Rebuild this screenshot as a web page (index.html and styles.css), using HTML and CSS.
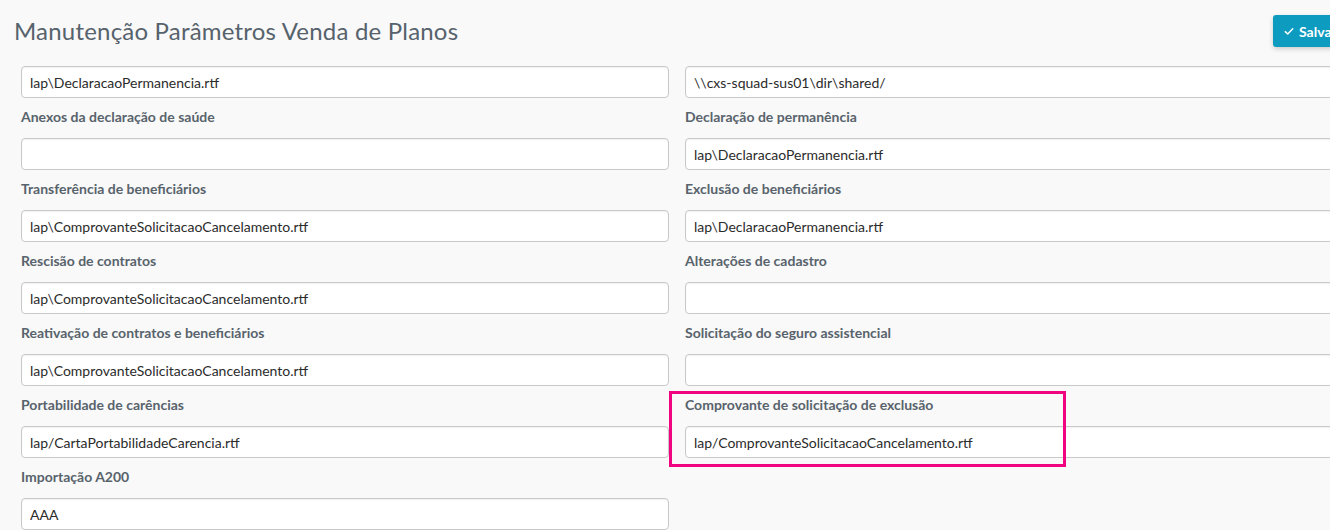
FILE: index.html
```html
<!DOCTYPE html>
<html lang="pt-BR">
<head>
<meta charset="utf-8">
<title>Manutenção Parâmetros Venda de Planos</title>
<link rel="stylesheet" href="styles.css">
</head>
<body>
<div class="page">
  <header class="page-header">
    <h1 class="page-title">Manutenção Parâmetros Venda de Planos</h1>
    <button class="btn-save" type="button">
      <svg class="btn-icon" viewBox="0 0 12 10" width="10" height="9"><path d="M1.5 5.2 L4.5 8 L10.5 1.8" fill="none" stroke="#fff" stroke-width="1.8" stroke-linecap="round" stroke-linejoin="round"/></svg>
      <span>Salvar</span>
    </button>
  </header>

  <form class="form-grid">
    <div class="field field-nolabel">
      <input class="input" type="text" value="lap\DeclaracaoPermanencia.rtf">
    </div>
    <div class="field field-nolabel">
      <input class="input" type="text" value="\\cxs-squad-sus01\dir\shared/">
    </div>

    <div class="field">
      <label class="label">Anexos da declaração de saúde</label>
      <input class="input" type="text" value="">
    </div>
    <div class="field">
      <label class="label">Declaração de permanência</label>
      <input class="input" type="text" value="lap\DeclaracaoPermanencia.rtf">
    </div>

    <div class="field">
      <label class="label">Transferência de beneficiários</label>
      <input class="input" type="text" value="lap\ComprovanteSolicitacaoCancelamento.rtf">
    </div>
    <div class="field">
      <label class="label">Exclusão de beneficiários</label>
      <input class="input" type="text" value="lap\DeclaracaoPermanencia.rtf">
    </div>

    <div class="field">
      <label class="label">Rescisão de contratos</label>
      <input class="input" type="text" value="lap\ComprovanteSolicitacaoCancelamento.rtf">
    </div>
    <div class="field">
      <label class="label">Alterações de cadastro</label>
      <input class="input" type="text" value="">
    </div>

    <div class="field">
      <label class="label">Reativação de contratos e beneficiários</label>
      <input class="input" type="text" value="lap\ComprovanteSolicitacaoCancelamento.rtf">
    </div>
    <div class="field">
      <label class="label">Solicitação do seguro assistencial</label>
      <input class="input" type="text" value="">
    </div>

    <div class="field">
      <label class="label">Portabilidade de carências</label>
      <input class="input" type="text" value="lap/CartaPortabilidadeCarencia.rtf">
    </div>
    <div class="field field-marked">
      <label class="label">Comprovante de solicitação de exclusão</label>
      <input class="input" type="text" value="lap/ComprovanteSolicitacaoCancelamento.rtf">
      <span class="mark-box"></span>
    </div>

    <div class="field">
      <label class="label">Importação A200</label>
      <input class="input" type="text" value="AAA">
    </div>
  </form>
</div>
</body>
</html>
```

FILE: styles.css
```css
html, body {
  margin: 0;
  padding: 0;
}

body {
  background: #f9f9f9;
  font-family: "Lato", "Noto Sans", "Liberation Sans", sans-serif;
  overflow: hidden;
  width: 1330px;
  height: 530px;
}

.page {
  width: 1360px;
}

.page-header {
  display: flex;
  align-items: center;
  justify-content: space-between;
  padding: 15px 0 0 14px;
  height: 32px;
  width: 1339px;
  box-sizing: content-box;
}

.page-title {
  margin: 0;
  font-size: 24px;
  font-weight: 400;
  line-height: 32px;
  color: #56626c;
  letter-spacing: 0.2px;
}

.btn-save {
  display: flex;
  align-items: center;
  gap: 5px;
  width: 80px;
  height: 32px;
  padding: 0 0 0 11px;
  border: none;
  border-radius: 3px;
  background: #0e9bc0;
  color: #fff;
  font-family: inherit;
  font-size: 14px;
  font-weight: 700;
  box-shadow: 0 2px 5px rgba(0, 0, 0, 0.18);
  box-sizing: border-box;
}

.btn-icon {
  display: block;
}

.form-grid {
  display: grid;
  grid-template-columns: 648px 648px;
  column-gap: 16px;
  margin: 19px 0 0 21px;
  padding: 0;
}

.field {
  display: flex;
  flex-direction: column;
  margin-bottom: 9px;
}

.field-nolabel {
  margin-bottom: 9px;
}

.field-marked {
  position: relative;
}

.label {
  font-size: 14px;
  font-weight: 700;
  line-height: 20px;
  color: #58636c;
  margin-bottom: 11px;
}

.input {
  height: 32px;
  box-sizing: border-box;
  border: 1px solid #c9c9c9;
  border-radius: 4px;
  background: #fff;
  box-shadow: inset 0 1px 2px rgba(0, 0, 0, 0.06);
  padding: 0 8px;
  font-family: inherit;
  font-size: 14px;
  color: #2b2b2b;
  outline: none;
}

.mark-box {
  position: absolute;
  left: -16px;
  top: -4px;
  width: 397px;
  height: 76px;
  border: 3px solid #f0047f;
  box-sizing: border-box;
  pointer-events: none;
}
```
